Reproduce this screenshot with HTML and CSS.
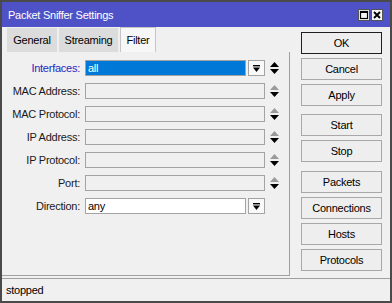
FILE: index.html
```html
<!DOCTYPE html>
<html>
<head>
<meta charset="utf-8">
<link rel="stylesheet" href="styles.css">
</head>
<body>
<div class="window">
  <div class="titlebar">
    <span class="title">Packet Sniffer Settings</span>
    <div class="tb-btns">
      <span class="tb-btn"><svg width="10" height="10" viewBox="0 0 10 10"><rect x="1.5" y="1.5" width="7" height="7" fill="none" stroke="#000" stroke-width="1.2"/><rect x="1" y="1" width="8" height="2" fill="#000"/></svg></span>
      <span class="tb-btn"><svg width="10" height="10" viewBox="0 0 10 10"><path d="M2 2L8 8M8 2L2 8" stroke="#000" stroke-width="1.8"/></svg></span>
    </div>
  </div>
  <div class="main">
    <div class="left">
      <div class="tabs">
        <div class="tab tab-general">General</div>
        <div class="tab tab-streaming">Streaming</div>
        <div class="tab tab-filter active">Filter</div>
      </div>
      <div class="panel">
        <div class="row">
          <span class="label label-active">Interfaces:</span>
          <div class="field-wrap">
            <span class="field sel">all</span>
            <span class="dd"><svg width="7" height="7" viewBox="0 0 7 7"><rect x="0" y="0" width="7" height="1.4" fill="#000"/><path d="M0 2.5H7L3.5 7z" fill="#000"/></svg></span>
          </div>
          <span class="updown"><svg width="9" height="12" viewBox="0 0 9 12"><path d="M4.5 0L9 5H0z" fill="#000"/><path d="M0 7H9L4.5 12z" fill="#000"/></svg></span>
        </div>
        <div class="row">
          <span class="label">MAC Address:</span>
          <div class="field-wrap"><span class="field"></span></div>
          <span class="updown"><svg width="9" height="12" viewBox="0 0 9 12"><path d="M4.5 0L9 5H0z" fill="#9a9a9a"/><path d="M0 7H9L4.5 12z" fill="#000"/></svg></span>
        </div>
        <div class="row">
          <span class="label">MAC Protocol:</span>
          <div class="field-wrap"><span class="field"></span></div>
          <span class="updown"><svg width="9" height="12" viewBox="0 0 9 12"><path d="M4.5 0L9 5H0z" fill="#9a9a9a"/><path d="M0 7H9L4.5 12z" fill="#000"/></svg></span>
        </div>
        <div class="row">
          <span class="label">IP Address:</span>
          <div class="field-wrap"><span class="field"></span></div>
          <span class="updown"><svg width="9" height="12" viewBox="0 0 9 12"><path d="M4.5 0L9 5H0z" fill="#9a9a9a"/><path d="M0 7H9L4.5 12z" fill="#000"/></svg></span>
        </div>
        <div class="row">
          <span class="label">IP Protocol:</span>
          <div class="field-wrap"><span class="field"></span></div>
          <span class="updown"><svg width="9" height="12" viewBox="0 0 9 12"><path d="M4.5 0L9 5H0z" fill="#9a9a9a"/><path d="M0 7H9L4.5 12z" fill="#000"/></svg></span>
        </div>
        <div class="row">
          <span class="label">Port:</span>
          <div class="field-wrap"><span class="field"></span></div>
          <span class="updown"><svg width="9" height="12" viewBox="0 0 9 12"><path d="M4.5 0L9 5H0z" fill="#9a9a9a"/><path d="M0 7H9L4.5 12z" fill="#000"/></svg></span>
        </div>
        <div class="row">
          <span class="label">Direction:</span>
          <div class="field-wrap">
            <span class="field white">any</span>
            <span class="dd"><svg width="7" height="7" viewBox="0 0 7 7"><rect x="0" y="0" width="7" height="1.4" fill="#000"/><path d="M0 2.5H7L3.5 7z" fill="#000"/></svg></span>
          </div>
        </div>
      </div>
    </div>
    <div class="right">
      <div class="btn default">OK</div>
      <div class="btn">Cancel</div>
      <div class="btn">Apply</div>
      <div class="btn group-start">Start</div>
      <div class="btn">Stop</div>
      <div class="btn group-packets">Packets</div>
      <div class="btn">Connections</div>
      <div class="btn">Hosts</div>
      <div class="btn">Protocols</div>
    </div>
  </div>
  <div class="status">stopped</div>
</div>
</body>
</html>
```

FILE: styles.css
```css
html, body {
  margin: 0;
  padding: 0;
  background: #f0f0f0;
}
body {
  font-family: "Liberation Sans", Arial, sans-serif;
  font-size: 11px;
  letter-spacing: -0.25px;
  color: #000;
}
.window {
  width: 392px;
  height: 303px;
  box-sizing: border-box;
  border: 2px solid #4a4a4a;
  background: #f0f0f0;
  display: flex;
  flex-direction: column;
}
.titlebar {
  height: 25px;
  flex: none;
  background: #4f52c6;
  color: #fff;
  display: flex;
  align-items: center;
  justify-content: space-between;
  padding: 0 7px 0 6px;
  font-size: 11px;
}
.tb-btns {
  display: flex;
  gap: 1px;
}
.tb-btn {
  width: 12px;
  height: 12px;
  box-sizing: border-box;
  border: 1px solid #555;
  background: #f4f4f4;
  display: flex;
  align-items: center;
  justify-content: center;
}
.tb-btn svg { display: block; }
.main {
  display: flex;
  height: 251px;
  flex: none;
}
.left {
  width: 288px;
  display: flex;
  flex-direction: column;
}
.tabs {
  height: 25px;
  display: flex;
  align-items: flex-end;
  padding-left: 5px;
  gap: 2px;
}
.tab {
  height: 24px;
  box-sizing: border-box;
  background: #dcdcdc;
  display: flex;
  align-items: center;
  justify-content: center;
}
.tab-general { width: 50px; }
.tab-streaming { width: 59px; }
.tab-filter { width: 36px; }
.tab.active {
  height: 25px;
  background: #f7f7f7;
  border: 1px solid #c6c6c6;
  border-bottom: none;
}
.panel {
  height: 224px;
  box-sizing: border-box;
  border-right: 1px solid #a0a0a0;
  border-bottom: 1px solid #a0a0a0;
  padding-top: 8px;
}
.row {
  display: flex;
  align-items: center;
  height: 16px;
  margin-bottom: 7px;
}
.label {
  width: 78px;
  margin-right: 5px;
  text-align: right;
  color: #1a1a1a;
  white-space: nowrap;
}
.label-active { color: #2626c4; }
.field-wrap {
  width: 180px;
  height: 16px;
  display: flex;
  gap: 2px;
}
.field {
  flex: 1;
  box-sizing: border-box;
  border: 1px solid #a3a3a3;
  padding-left: 2px;
  line-height: 14px;
  background: #f0f0f0;
}
.field.sel {
  background: #0078d7;
  color: #fff;
}
.field.white { background: #fff; }
.dd {
  width: 17px;
  box-sizing: border-box;
  border: 1px solid #a3a3a3;
  background: #f9f9f9;
  display: flex;
  align-items: center;
  justify-content: center;
}
.dd svg, .updown svg { display: block; }
.updown {
  margin-left: 5px;
  width: 9px;
  height: 12px;
}
.right {
  flex: 1;
  padding: 5px 0 0 11px;
  display: flex;
  flex-direction: column;
}
.btn {
  width: 81px;
  height: 22px;
  box-sizing: border-box;
  border: 1px solid #a8a8a8;
  background: #eeeeee;
  display: flex;
  align-items: center;
  justify-content: center;
  margin-bottom: 4px;
  flex: none;
}
.btn.default { border: 1px solid #1e1e1e; }
.group-start { margin-top: 4px; }
.group-packets { margin-top: 5px; }
.status {
  flex: 1;
  box-sizing: border-box;
  border-top: 1px solid #a0a0a0;
  padding-left: 4px;
  display: flex;
  align-items: center;
}
```
